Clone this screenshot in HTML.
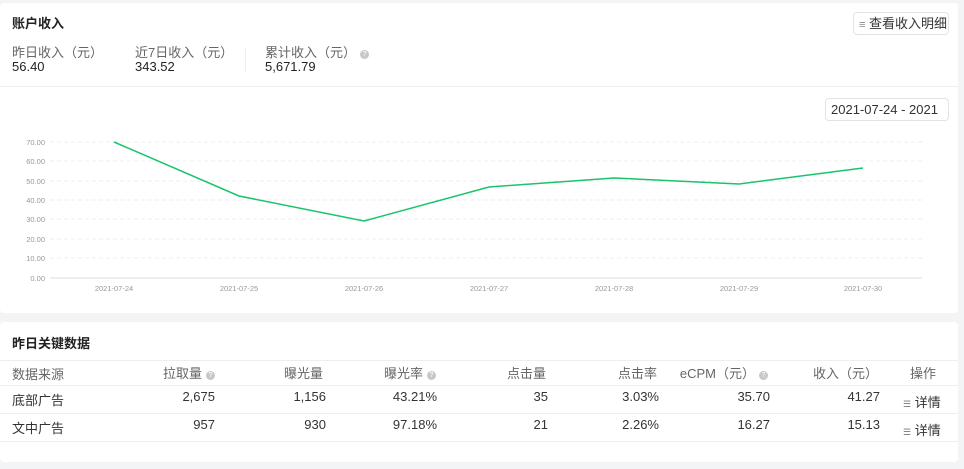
<!DOCTYPE html>
<html><head><meta charset="utf-8"><style>
*{margin:0;padding:0;box-sizing:border-box}
body{width:964px;height:445px;background:#f3f4f6;font-family:"Liberation Sans","Noto Sans CJK SC",sans-serif;color:#333;position:relative;overflow:hidden;font-size:13px}
.card{position:absolute;left:0;width:958px;background:#fff;border-radius:4px}
.abs{position:absolute;white-space:nowrap}
.q{display:inline-block;width:9px;height:9px;border-radius:50%;background:#c8c8c8;color:#fff;font-size:7px;line-height:9px;text-align:center;vertical-align:1px;margin-left:4px}
.btn{position:absolute;border:1px solid #e3e3e3;border-radius:4px;background:#fff;font-size:13px;color:#333}
.row{position:absolute;left:0;width:958px;border-top:1px solid #eeeeee;height:28px}
.c{position:absolute;white-space:nowrap;font-size:13px}
.g{color:#666}
</style></head><body>
<div class="card" style="top:3px;height:310px">
  <div class="abs" style="left:12px;top:10px;font-size:13px;font-weight:bold;color:#222">账户收入</div>
  <div class="btn" style="left:853px;top:9px;width:96px;height:23px;line-height:21px;padding-left:5px"><span style="color:#888;font-size:11px">≡</span> 查看收入明细</div>
  <div class="abs g" style="left:12px;top:39px">昨日收入（元）</div>
  <div class="abs" style="left:12px;top:56px;color:#222">56.40</div>
  <div class="abs g" style="left:135px;top:39px">近7日收入（元）</div>
  <div class="abs" style="left:135px;top:56px;color:#222">343.52</div>
  <div class="abs" style="left:245px;top:45px;width:1px;height:24px;background:#eee"></div>
  <div class="abs g" style="left:265px;top:39px">累计收入（元）<span class="q">?</span></div>
  <div class="abs" style="left:265px;top:56px;color:#222">5,671.79</div>
  <div class="abs" style="left:0;top:83px;width:958px;height:1px;background:#eee"></div>
  <div class="btn" style="left:825px;top:95px;width:124px;height:23px;line-height:21px;padding-left:5px;overflow:hidden">2021-07-24 - 2021 <span style="color:#bbb;font-size:10px">▦</span></div>
</div>
<svg class="abs" style="left:0;top:0" width="964" height="300">
<g stroke="#ececec" stroke-dasharray="4,3">
<line x1="50" x2="922" y1="142" y2="142"/><line x1="50" x2="922" y1="161" y2="161"/><line x1="50" x2="922" y1="181" y2="181"/><line x1="50" x2="922" y1="200" y2="200"/><line x1="50" x2="922" y1="219" y2="219"/><line x1="50" x2="922" y1="239" y2="239"/><line x1="50" x2="922" y1="258" y2="258"/>
</g>
<line x1="50" x2="922" y1="278" y2="278" stroke="#ddd"/>
<g font-size="7.5" fill="#999" font-family="Liberation Sans" text-anchor="end">
<text x="45" y="145">70.00</text><text x="45" y="164">60.00</text><text x="45" y="184">50.00</text><text x="45" y="203">40.00</text><text x="45" y="222">30.00</text><text x="45" y="242">20.00</text><text x="45" y="261">10.00</text><text x="45" y="281">0.00</text>
</g>
<g font-size="7.5" fill="#999" font-family="Liberation Sans" text-anchor="middle">
<text x="114" y="291">2021-07-24</text><text x="239" y="291">2021-07-25</text><text x="364" y="291">2021-07-26</text><text x="489" y="291">2021-07-27</text><text x="614" y="291">2021-07-28</text><text x="739" y="291">2021-07-29</text><text x="863" y="291">2021-07-30</text>
</g>
<polyline fill="none" stroke="#19c46b" stroke-width="1.5" points="114,142 239,196 364,221 489,187 614,178 739,184 863,168"/>
</svg>
<div class="card" style="top:322px;height:140px">
  <div class="abs" style="left:12px;top:11px;font-weight:bold;color:#222">昨日关键数据</div>
  <div class="row g" style="top:38px;height:25px">
    <span class="c" style="left:12px;top:3px">数据来源</span>
    <span class="c" style="right:743px;top:2px">拉取量<span class="q">?</span></span>
    <span class="c" style="right:635px;top:2px">曝光量</span>
    <span class="c" style="right:522px;top:2px">曝光率<span class="q">?</span></span>
    <span class="c" style="right:412px;top:2px">点击量</span>
    <span class="c" style="right:301px;top:2px">点击率</span>
    <span class="c" style="right:190px;top:2px">eCPM（元）<span class="q">?</span></span>
    <span class="c" style="right:80px;top:2px">收入（元）</span>
    <span class="c" style="left:910px;top:2px">操作</span>
  </div>
  <div class="row" style="top:63px">
    <span class="c" style="left:12px;top:4px">底部广告</span>
    <span class="c" style="right:743px;top:3px">2,675</span>
    <span class="c" style="right:632px;top:3px">1,156</span>
    <span class="c" style="right:521px;top:3px">43.21%</span>
    <span class="c" style="right:410px;top:3px">35</span>
    <span class="c" style="right:299px;top:3px">3.03%</span>
    <span class="c" style="right:188px;top:3px">35.70</span>
    <span class="c" style="right:78px;top:3px">41.27</span>
    <span class="c" style="left:903px;top:6px"><span style="font-size:9px;color:#777">☰</span> 详情</span>
  </div>
  <div class="row" style="top:91px">
    <span class="c" style="left:12px;top:4px">文中广告</span>
    <span class="c" style="right:743px;top:3px">957</span>
    <span class="c" style="right:632px;top:3px">930</span>
    <span class="c" style="right:521px;top:3px">97.18%</span>
    <span class="c" style="right:410px;top:3px">21</span>
    <span class="c" style="right:299px;top:3px">2.26%</span>
    <span class="c" style="right:188px;top:3px">16.27</span>
    <span class="c" style="right:78px;top:3px">15.13</span>
    <span class="c" style="left:903px;top:6px"><span style="font-size:9px;color:#777">☰</span> 详情</span>
  </div>
  <div class="row" style="top:119px"></div>
</div>
</body></html>
